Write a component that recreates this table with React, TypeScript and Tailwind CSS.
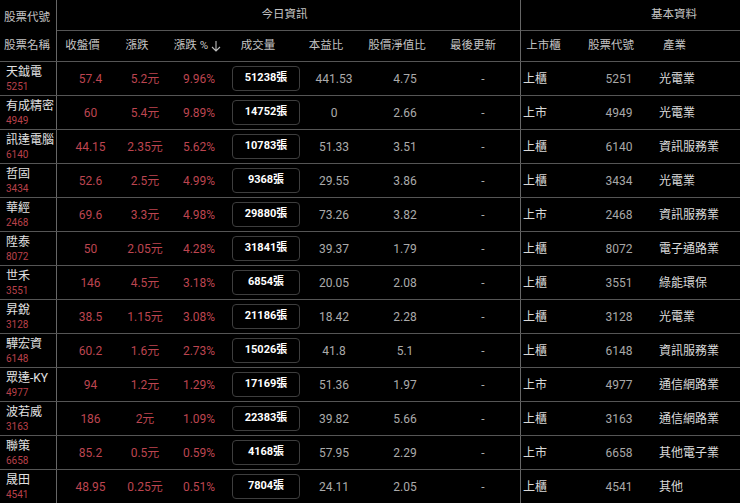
import React from "react"

// ── Data ─────────────────────────────────────────────────────────────────────

interface Row {
  name: string
  code: string
  close: string
  change: string
  pct: string
  volume: string
  pe: string
  pb: string
  market: string
  industry: string
}

const ROWS: Row[] = [
  { name: "天鉞電",   code: "5251", close: "57.4",  change: "5.2元",  pct: "9.96%", volume: "51238張", pe: "441.53", pb: "4.75", market: "上櫃", industry: "光電業" },
  { name: "有成精密", code: "4949", close: "60",    change: "5.4元",  pct: "9.89%", volume: "14752張", pe: "0",      pb: "2.66", market: "上市", industry: "光電業" },
  { name: "訊達電腦", code: "6140", close: "44.15", change: "2.35元", pct: "5.62%", volume: "10783張", pe: "51.33",  pb: "3.51", market: "上櫃", industry: "資訊服務業" },
  { name: "哲固",     code: "3434", close: "52.6",  change: "2.5元",  pct: "4.99%", volume: "9368張",  pe: "29.55",  pb: "3.86", market: "上櫃", industry: "光電業" },
  { name: "華經",     code: "2468", close: "69.6",  change: "3.3元",  pct: "4.98%", volume: "29880張", pe: "73.26",  pb: "3.82", market: "上市", industry: "資訊服務業" },
  { name: "陞泰",     code: "8072", close: "50",    change: "2.05元", pct: "4.28%", volume: "31841張", pe: "39.37",  pb: "1.79", market: "上櫃", industry: "電子通路業" },
  { name: "世禾",     code: "3551", close: "146",   change: "4.5元",  pct: "3.18%", volume: "6854張",  pe: "20.05",  pb: "2.08", market: "上櫃", industry: "綠能環保" },
  { name: "昇銳",     code: "3128", close: "38.5",  change: "1.15元", pct: "3.08%", volume: "21186張", pe: "18.42",  pb: "2.28", market: "上櫃", industry: "光電業" },
  { name: "驊宏資",   code: "6148", close: "60.2",  change: "1.6元",  pct: "2.73%", volume: "15026張", pe: "41.8",   pb: "5.1",  market: "上櫃", industry: "資訊服務業" },
  { name: "眾達-KY",  code: "4977", close: "94",    change: "1.2元",  pct: "1.29%", volume: "17169張", pe: "51.36",  pb: "1.97", market: "上市", industry: "通信網路業" },
  { name: "波若威",   code: "3163", close: "186",   change: "2元",    pct: "1.09%", volume: "22383張", pe: "39.82",  pb: "5.66", market: "上櫃", industry: "通信網路業" },
  { name: "聯策",     code: "6658", close: "85.2",  change: "0.5元",  pct: "0.59%", volume: "4168張",  pe: "57.95",  pb: "2.29", market: "上市", industry: "其他電子業" },
  { name: "晟田",     code: "4541", close: "48.95", change: "0.25元", pct: "0.51%", volume: "7804張",  pe: "24.11",  pb: "2.05", market: "上櫃", industry: "其他" },
]

// ── Column header with sort-icon slot ────────────────────────────────────────

function Head({ w, label, sorted = false }: { w: string; label: string; sorted?: boolean }) {
  return (
    <div className={`${w} shrink-0 flex items-center justify-center whitespace-nowrap`}>
      <span>{label}</span>
      <span className="w-[16px] flex justify-center">
        {sorted && (
          <svg width="10" height="12" viewBox="0 0 10 12" fill="none" stroke="#bdbdbd" strokeWidth="1.1">
            <path d="M5 1v10M1 7l4 4 4-4" />
          </svg>
        )}
      </span>
    </div>
  )
}

// ── Page ─────────────────────────────────────────────────────────────────────

export default function App() {
  return (
    <div
      className="w-[740px] h-[503px] overflow-hidden bg-black text-[#c4c4c4]"
      style={{ fontFamily: "Roboto, 'Noto Sans CJK TC', sans-serif" }}
    >
      <div className="w-[830px]">
        {/* Header */}
        <div className="flex h-[62px] border-b border-[#555] text-[11.5px]">
          <div className="w-[57px] shrink-0 border-r border-[#666] flex flex-col pl-[4px]">
            <div className="h-[31px] flex items-center pt-[4px]">股票代號</div>
            <div className="h-[30px] flex items-center">股票名稱</div>
          </div>

          <div className="w-[464px] shrink-0 border-r border-[#666] flex flex-col">
            <div className="h-[31px] border-b border-[#555] flex items-center justify-center pr-[8px]">今日資訊</div>
            <div className="h-[30px] flex">
              <Head w="w-[67px]" label="收盤價" />
              <Head w="w-[42px]" label="漲跌" />
              <Head w="w-[66px]" label="漲跌 %" sorted />
              <Head w="w-[68px]" label="成交量" />
              <Head w="w-[68px]" label="本益比" />
              <Head w="w-[74px]" label="股價淨值比" />
              <Head w="w-[78px]" label="最後更新" />
            </div>
          </div>

          <div className="w-[306px] shrink-0 flex flex-col">
            <div className="h-[31px] border-b border-[#555] flex items-center justify-center">基本資料</div>
            <div className="h-[30px] flex">
              <Head w="w-[61px]" label="上市櫃" />
              <Head w="w-[74px]" label="股票代號" />
              <div className="w-[171px] shrink-0 flex items-center pl-[7px]">產業</div>
            </div>
          </div>
        </div>

        {/* Rows */}
        {ROWS.map(r => (
          <div key={r.code} className="flex h-[34px] border-b border-[#555] text-[12px]">
            <div className="w-[57px] shrink-0 border-r border-[#666] flex flex-col justify-center pl-[6px] leading-none">
              <span className="text-[12px] text-[#e2e2e2] whitespace-nowrap">{r.name}</span>
              <span className="text-[10px] text-[#b8414a] mt-[4px]">{r.code}</span>
            </div>

            <div className="w-[464px] shrink-0 border-r border-[#666] flex">
              <div className="w-[67px] shrink-0 flex items-center justify-center text-[#bd4550]">{r.close}</div>
              <div className="w-[42px] shrink-0 flex items-center justify-center text-[#bd4550] whitespace-nowrap">{r.change}</div>
              <div className="w-[66px] shrink-0 flex items-center justify-center text-[#bd4550]">{r.pct}</div>
              <div className="w-[68px] shrink-0 flex items-center justify-center">
                <div className="w-[68px] h-[25px] rounded-[4px] border border-[#3e3e3e] flex items-center justify-center text-[11px] font-bold text-white">
                  {r.volume}
                </div>
              </div>
              <div className="w-[68px] shrink-0 flex items-center justify-center text-[#ababab]">{r.pe}</div>
              <div className="w-[74px] shrink-0 flex items-center justify-center text-[#ababab]">{r.pb}</div>
              <div className="w-[78px] shrink-0 flex items-center justify-center text-[#ababab] pl-[4px]">-</div>
            </div>

            <div className="w-[306px] shrink-0 flex">
              <div className="w-[61px] shrink-0 flex items-center pl-[2px] text-[#dadada]">{r.market}</div>
              <div className="w-[74px] shrink-0 flex items-center justify-center text-[#a8a8a8]">{r.code}</div>
              <div className="w-[171px] shrink-0 flex items-center pl-[3px] text-[#dadada]">{r.industry}</div>
            </div>
          </div>
        ))}
      </div>
    </div>
  )
}
